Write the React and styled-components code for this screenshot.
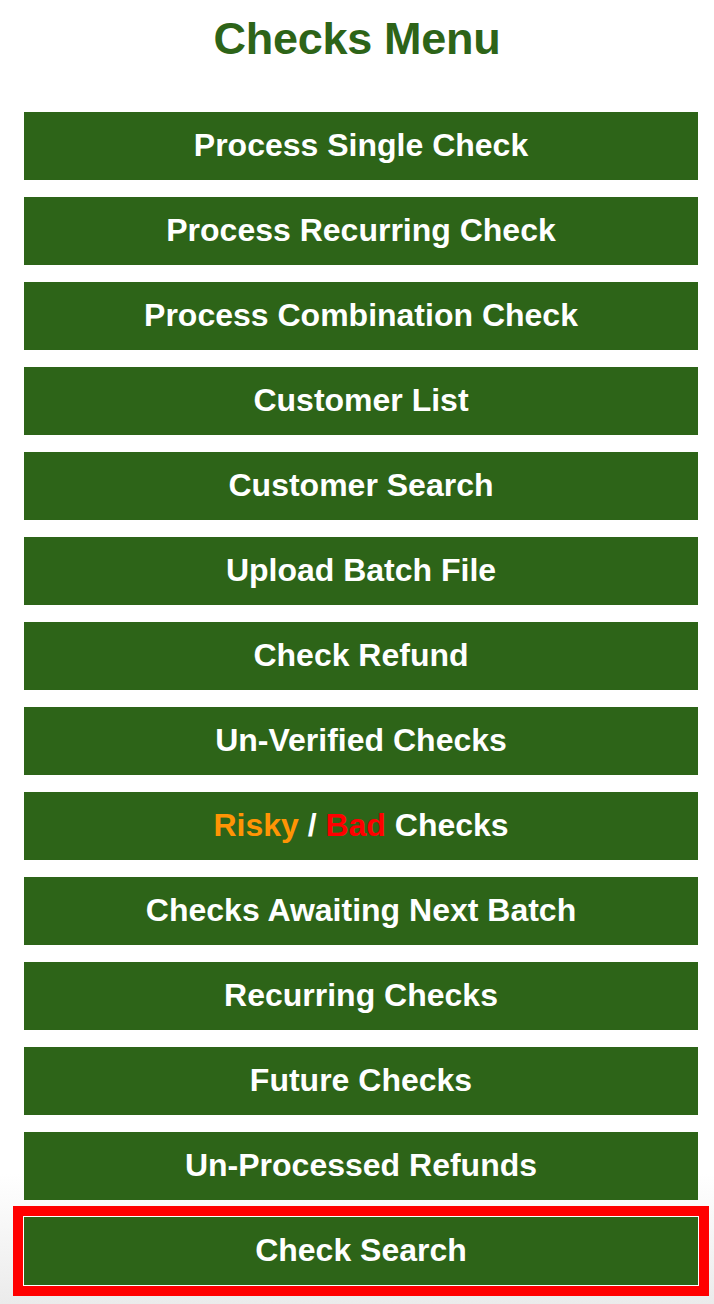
import React from "react";
import styled, { createGlobalStyle } from "styled-components";

const GlobalStyle = createGlobalStyle`
  html, body {
    margin: 0;
    padding: 0;
  }
  body {
    min-height: 1304px;
    background: linear-gradient(to bottom, #ffffff 0%, #ffffff 90%, #ebebeb 100%);
    font-family: "Liberation Sans", Arial, Helvetica, sans-serif;
  }
`;

const Page = styled.main`
  display: flex;
  flex-direction: column;
  padding: 14px 16px 0 24px;
`;

const Title = styled.h1`
  margin: 0 0 48px -8px;
  text-align: center;
  font-size: 45px;
  line-height: 50px;
  font-weight: 700;
  color: #2d6418;
  letter-spacing: -0.3px;
`;

const MenuList = styled.nav`
  display: flex;
  flex-direction: column;
  gap: 17px;
`;

const MenuButton = styled.a`
  display: flex;
  align-items: center;
  justify-content: center;
  box-sizing: border-box;
  height: 68px;
  padding-bottom: 2px;
  background: #2d6418;
  color: #ffffff;
  font-size: 32px;
  font-weight: 700;
  text-decoration: none;
  cursor: pointer;
  outline: ${(p) => (p.$active ? "10px solid #ff0000" : "none")};
  outline-offset: 1px;
  box-shadow: ${(p) => (p.$active ? "0 0 0 1px #ffffff" : "none")};
`;

const Tone = styled.span`
  color: ${(p) => p.$color};
  white-space: pre;
`;

const items = [
  "Process Single Check",
  "Process Recurring Check",
  "Process Combination Check",
  "Customer List",
  "Customer Search",
  "Upload Batch File",
  "Check Refund",
  "Un-Verified Checks",
  "RISKY",
  "Checks Awaiting Next Batch",
  "Recurring Checks",
  "Future Checks",
  "Un-Processed Refunds",
  "Check Search",
];

export default function App() {
  return (
    <>
      <GlobalStyle />
      <Page>
        <Title>Checks Menu</Title>
        <MenuList>
          {items.map((label, i) => (
            <MenuButton key={label} $active={i === items.length - 1}>
              {label === "RISKY" ? (
                <>
                  <Tone $color="#ff9405">Risky</Tone>
                  <Tone $color="#ffffff"> / </Tone>
                  <Tone $color="#ff0000">Bad</Tone>
                  <Tone $color="#ffffff"> Checks</Tone>
                </>
              ) : (
                label
              )}
            </MenuButton>
          ))}
        </MenuList>
      </Page>
    </>
  );
}
